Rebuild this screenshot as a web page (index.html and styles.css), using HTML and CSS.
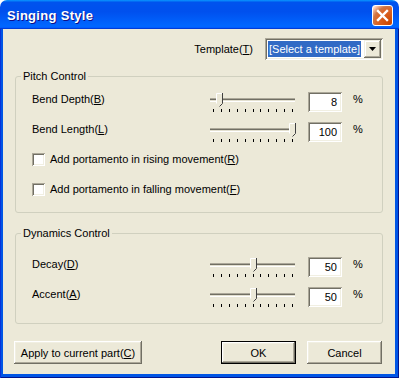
FILE: index.html
```html
<!DOCTYPE html>
<html>
<head>
<title>Singing Style</title>
<link rel="stylesheet" href="styles.css">
</head>
<body>
<div class="window">
	<div class="titlebar">
		<span class="title">Singing Style</span>
		<div class="close">
			<svg width="19" height="19" viewBox="0 0 19 19"><path d="M5 5L14 14M14 5L5 14" stroke="#fff" stroke-width="2.4" stroke-linecap="square"/></svg>
		</div>
	</div>
	<div class="frame">
		<div class="client">
			<div class="templateRow">
				<span>Template(<u>T</u>)</span>
				<div class="combo">
					<span class="comboText">[Select a template]</span>
					<div class="comboButton">
						<svg width="7" height="4" viewBox="0 0 7 4"><path d="M0 0H7L3.5 4Z" fill="#000"/></svg>
					</div>
				</div>
			</div>

			<div class="group">
				<div class="groupTitle">Pitch Control</div>
				<div class="rows pitchRows">
					<div class="row">
						<span class="label">Bend Depth(<u>B</u>)</span>
						<svg class="slider" width="92" height="22" viewBox="0 0 92 22">
							<rect x="4" y="7" width="85" height="1" fill="#ACA899"/>
							<rect x="4" y="8" width="85" height="1" fill="#716F64"/>
							<rect x="4" y="9" width="85" height="1" fill="#E3E0D0"/>
							<rect x="4" y="10" width="85" height="1" fill="#fff"/>
							<path class="ticks" d="M7.5 18v3M15.5 18v3M23.5 18v3M31.5 18v3M39.5 18v3M47.5 18v3M54.5 18v3M62.5 18v3M70.5 18v3M78.5 18v3M86.5 18v3"/>
							<g transform="translate(13 0)">
								<path d="M-3 2H4V12L0.5 15.5L-3 12Z" fill="#ECE9D8"/>
								<path d="M-2.5 12.5V2.5H3" stroke="#fff" fill="none"/>
								<path d="M3.5 2V12.5L0.5 15.5" stroke="#404040" fill="none"/>
							</g>
						</svg>
						<div class="value">8</div>
						<span class="percent">%</span>
					</div>
					<div class="row">
						<span class="label">Bend Length(<u>L</u>)</span>
						<svg class="slider" width="92" height="22" viewBox="0 0 92 22">
							<rect x="4" y="7" width="85" height="1" fill="#ACA899"/>
							<rect x="4" y="8" width="85" height="1" fill="#716F64"/>
							<rect x="4" y="9" width="85" height="1" fill="#E3E0D0"/>
							<rect x="4" y="10" width="85" height="1" fill="#fff"/>
							<path class="ticks" d="M7.5 18v3M15.5 18v3M23.5 18v3M31.5 18v3M39.5 18v3M47.5 18v3M54.5 18v3M62.5 18v3M70.5 18v3M78.5 18v3M86.5 18v3"/>
							<g transform="translate(86 0)">
								<path d="M-3 2H4V12L0.5 15.5L-3 12Z" fill="#ECE9D8"/>
								<path d="M-2.5 12.5V2.5H3" stroke="#fff" fill="none"/>
								<path d="M3.5 2V12.5L0.5 15.5" stroke="#404040" fill="none"/>
							</g>
						</svg>
						<div class="value">100</div>
						<span class="percent">%</span>
					</div>
					<div class="row">
						<span class="checkbox"></span>
						<span class="checkLabel">Add portamento in rising movement(<u>R</u>)</span>
					</div>
					<div class="row">
						<span class="checkbox"></span>
						<span class="checkLabel">Add portamento in falling movement(<u>F</u>)</span>
					</div>
				</div>
			</div>

			<div class="group dynamics">
				<div class="groupTitle">Dynamics Control</div>
				<div class="rows dynamicsRows">
					<div class="row">
						<span class="label">Decay(<u>D</u>)</span>
						<svg class="slider" width="92" height="22" viewBox="0 0 92 22">
							<rect x="4" y="7" width="85" height="1" fill="#ACA899"/>
							<rect x="4" y="8" width="85" height="1" fill="#716F64"/>
							<rect x="4" y="9" width="85" height="1" fill="#E3E0D0"/>
							<rect x="4" y="10" width="85" height="1" fill="#fff"/>
							<path class="ticks" d="M7.5 18v3M15.5 18v3M23.5 18v3M31.5 18v3M39.5 18v3M47.5 18v3M54.5 18v3M62.5 18v3M70.5 18v3M78.5 18v3M86.5 18v3"/>
							<g transform="translate(47 0)">
								<path d="M-3 2H4V12L0.5 15.5L-3 12Z" fill="#ECE9D8"/>
								<path d="M-2.5 12.5V2.5H3" stroke="#fff" fill="none"/>
								<path d="M3.5 2V12.5L0.5 15.5" stroke="#404040" fill="none"/>
							</g>
						</svg>
						<div class="value">50</div>
						<span class="percent">%</span>
					</div>
					<div class="row">
						<span class="label">Accent(<u>A</u>)</span>
						<svg class="slider" width="92" height="22" viewBox="0 0 92 22">
							<rect x="4" y="7" width="85" height="1" fill="#ACA899"/>
							<rect x="4" y="8" width="85" height="1" fill="#716F64"/>
							<rect x="4" y="9" width="85" height="1" fill="#E3E0D0"/>
							<rect x="4" y="10" width="85" height="1" fill="#fff"/>
							<path class="ticks" d="M7.5 18v3M15.5 18v3M23.5 18v3M31.5 18v3M39.5 18v3M47.5 18v3M54.5 18v3M62.5 18v3M70.5 18v3M78.5 18v3M86.5 18v3"/>
							<g transform="translate(47 0)">
								<path d="M-3 2H4V12L0.5 15.5L-3 12Z" fill="#ECE9D8"/>
								<path d="M-2.5 12.5V2.5H3" stroke="#fff" fill="none"/>
								<path d="M3.5 2V12.5L0.5 15.5" stroke="#404040" fill="none"/>
							</g>
						</svg>
						<div class="value">50</div>
						<span class="percent">%</span>
					</div>
				</div>
			</div>

			<div class="buttons">
				<div class="button apply">Apply to current part(<u>C</u>)</div>
				<div class="button ok">OK</div>
				<div class="button cancel">Cancel</div>
			</div>
		</div>
	</div>
</div>
</body>
</html>
```

FILE: styles.css
```css
html,body{
	margin:0;
	padding:0;
	background:#ffffff;
}
body{
	font-family:"Liberation Sans",Arial,sans-serif;
	font-size:11px;
	color:#000000;
}
u{
	text-decoration:underline;
	text-underline-offset:1px;
}
.window{
	width:399px;
	height:378px;
	display:flex;
	flex-direction:column;
	border-radius:7px 7px 0 0;
	overflow:hidden;
}
.titlebar{
	height:29px;
	box-sizing:border-box;
	padding:1px 6px 0 7px;
	display:flex;
	align-items:center;
	justify-content:space-between;
	background:linear-gradient(180deg,#0997ff,#0053ee 8%,#0050ee 40%,#0066ff 88%,#0066ff 93%,#005bff 95%,#003dd7 96%,#003dd7);
}
.title{
	color:#ffffff;
	font-weight:bold;
	font-size:13px;
	letter-spacing:0.3px;
	text-shadow:1px 1px #0f1089;
}
.close{
	width:21px;
	height:21px;
	box-sizing:border-box;
	border:1px solid #ffffff;
	border-radius:3px;
	display:flex;
	align-items:center;
	justify-content:center;
	background:radial-gradient(circle at 90% 90%,#cc4600 0%,#dc6527 55%,#cd7546 70%,#ffccb2 90%,#ffffff 100%);
}
.frame{
	flex:1;
	display:flex;
	padding:0 4px 4px 3px;
	background:#0055e5;
	box-shadow:inset 1px 0 #0831d9,inset -1px -1px #00138c;
}
.client{
	flex:1;
	background:#ece9d8;
	display:flex;
	flex-direction:column;
	padding-top:9px;
}
.templateRow{
	height:22px;
	display:flex;
	justify-content:flex-end;
	align-items:center;
	gap:12px;
	padding-right:12px;
}
.combo{
	width:118px;
	height:22px;
	box-sizing:border-box;
	padding:2px;
	display:flex;
	align-items:center;
	background:#ffffff;
	box-shadow:inset 1px 1px #aca899,inset -1px -1px #ffffff,inset 2px 2px #716f64,inset -2px -2px #f1efe2;
}
.comboText{
	margin-left:1px;
	padding:0 1px;
	height:16px;
	line-height:16px;
	background:#316ac5;
	color:#ffffff;
}
.comboButton{
	margin-left:auto;
	width:17px;
	height:18px;
	display:flex;
	align-items:center;
	justify-content:center;
	background:#ece9d8;
	box-shadow:inset -1px -1px #716f64,inset 1px 1px #f1efe2,inset -2px -2px #aca899,inset 2px 2px #ffffff;
}
.group{
	margin:16px 12px 0 12px;
	border:1px solid #d0d0bf;
	border-radius:3px;
}
.group.dynamics{
	margin-top:20px;
}
.groupTitle{
	width:max-content;
	margin:-7px 0 0 5px;
	padding:0 2px;
	line-height:13px;
	background:#ece9d8;
}
.pitchRows{
	padding:8px 0 1px 0;
}
.dynamicsRows{
	padding:16px 0 7px 0;
}
.row{
	height:30px;
	display:flex;
	align-items:flex-start;
	padding-left:16px;
}
.label{
	width:174px;
	line-height:16px;
}
.slider{
	display:block;
}
.ticks{
	stroke:#000000;
	stroke-width:1;
}
.value{
	margin:1px 0 0 10px;
	width:34px;
	height:20px;
	box-sizing:border-box;
	padding-right:5px;
	line-height:20px;
	text-align:right;
	background:#ffffff;
	box-shadow:inset 1px 1px #aca899,inset -1px -1px #ffffff,inset 2px 2px #716f64,inset -2px -2px #f1efe2;
}
.percent{
	margin-left:11px;
	line-height:16px;
}
.checkbox{
	width:13px;
	height:13px;
	margin:2px 0 0 0;
	background:#ffffff;
	box-shadow:inset 1px 1px #aca899,inset -1px -1px #ffffff,inset 2px 2px #716f64,inset -2px -2px #f1efe2;
}
.checkLabel{
	margin-left:5px;
	line-height:16px;
}
.buttons{
	display:flex;
	margin-top:17px;
	padding:0 13px 0 11px;
}
.button{
	height:23px;
	box-sizing:border-box;
	display:flex;
	align-items:center;
	justify-content:center;
	background:#ece9d8;
	box-shadow:inset -1px -1px #716f64,inset 1px 1px #ffffff,inset -2px -2px #aca899,inset 2px 2px #f1efe2;
}
.apply{
	width:128px;
}
.ok{
	width:75px;
	margin-left:auto;
	border:1px solid #000000;
}
.cancel{
	width:75px;
	margin-left:11px;
}
```
